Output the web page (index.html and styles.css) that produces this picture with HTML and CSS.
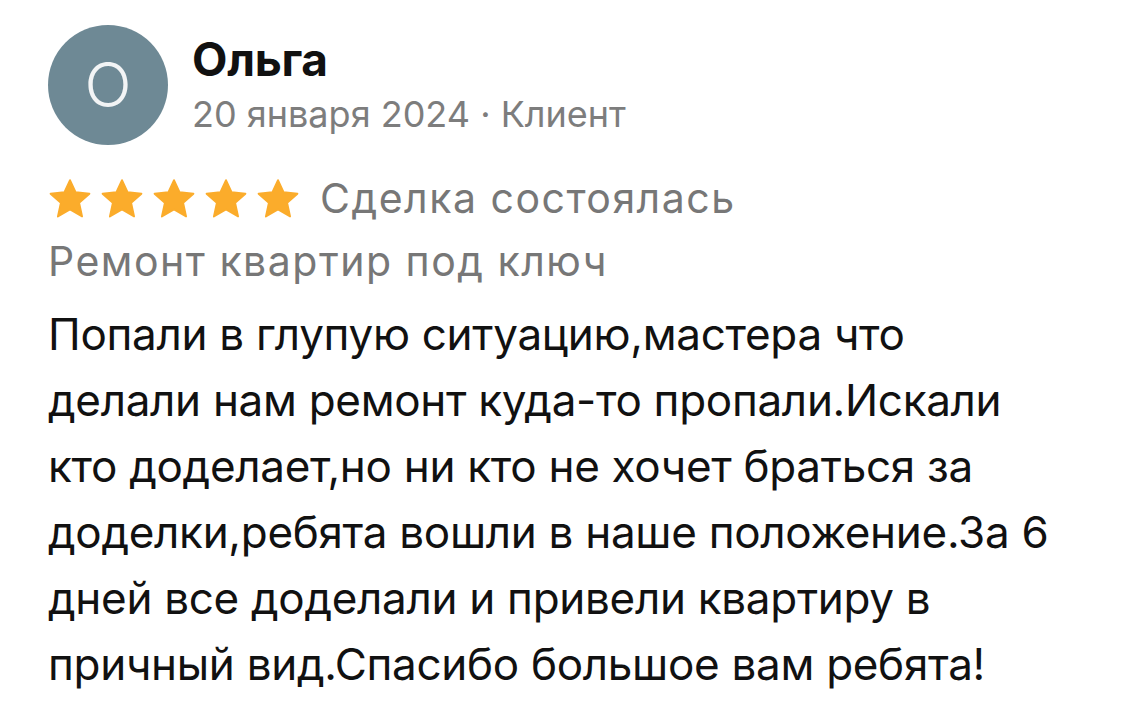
FILE: index.html
```html
<!DOCTYPE html>
<html lang="ru">
<head>
  <meta charset="UTF-8">
  <meta name="viewport" content="width=device-width, initial-scale=1.0">
  <title>Отзыв</title>
  <link rel="stylesheet" href="styles.css">
</head>
<body>
  <div class="review">
    <div class="review-header">
      <div class="avatar">О</div>
      <div class="author">
        <div class="author-name">Ольга</div>
        <div class="author-meta">20 января 2024 · Клиент</div>
      </div>
    </div>

    <div class="rating-row">
      <div class="stars">
        <svg class="star" viewBox="0 0 24 22"><polygon points="12,1 15.1,7.6 22.6,8.4 17,13.4 18.6,20.8 12,17 5.4,20.8 7,13.4 1.4,8.4 8.9,7.6"/></svg>
        <svg class="star" viewBox="0 0 24 22"><polygon points="12,1 15.1,7.6 22.6,8.4 17,13.4 18.6,20.8 12,17 5.4,20.8 7,13.4 1.4,8.4 8.9,7.6"/></svg>
        <svg class="star" viewBox="0 0 24 22"><polygon points="12,1 15.1,7.6 22.6,8.4 17,13.4 18.6,20.8 12,17 5.4,20.8 7,13.4 1.4,8.4 8.9,7.6"/></svg>
        <svg class="star" viewBox="0 0 24 22"><polygon points="12,1 15.1,7.6 22.6,8.4 17,13.4 18.6,20.8 12,17 5.4,20.8 7,13.4 1.4,8.4 8.9,7.6"/></svg>
        <svg class="star" viewBox="0 0 24 22"><polygon points="12,1 15.1,7.6 22.6,8.4 17,13.4 18.6,20.8 12,17 5.4,20.8 7,13.4 1.4,8.4 8.9,7.6"/></svg>
      </div>
      <span class="deal-status">Сделка состоялась</span>
    </div>

    <div class="service">Ремонт квартир под ключ</div>

    <p class="review-text">Попали в глупую ситуацию,мастера что<br>
      делали нам ремонт куда-то пропали.Искали<br>
      кто доделает,но ни кто не хочет браться за<br>
      доделки,ребята вошли в наше положение.За 6<br>
      дней все доделали и привели квартиру в<br>
      причный вид.Спасибо большое вам ребята!</p>
  </div>
</body>
</html>
```

FILE: styles.css
```css
* {
  margin: 0;
  padding: 0;
  box-sizing: border-box;
}

body {
  font-family: 'Inter', 'Noto Sans', sans-serif;
  background: #fff;
  color: #111;
}

.review {
  padding: 25px 48px 0;
  width: 1125px;
}

.review-header {
  display: flex;
  align-items: center;
  gap: 24px;
}

.avatar {
  flex-shrink: 0;
  width: 120px;
  height: 120px;
  border-radius: 50%;
  background: #6e8995;
  color: #f2f4f5;
  display: flex;
  align-items: center;
  justify-content: center;
  font-size: 62px;
  font-weight: 300;
  padding-bottom: 2px;
}

.author {
  margin-top: 2px;
}

.author-name {
  font-size: 46px;
  font-weight: 700;
  line-height: 52px;
  color: #111;
  letter-spacing: -0.3px;
}

.author-meta {
  font-size: 36px;
  line-height: 50px;
  color: #7d7d7d;
  margin-top: 4px;
}

.rating-row {
  display: flex;
  align-items: center;
  gap: 20px;
  margin-top: 28px;
}

.stars {
  display: flex;
  gap: 8px;
}

.star {
  width: 44px;
  height: 41px;
  fill: #fbac2b;
  stroke: #fbac2b;
  stroke-width: 1;
  stroke-linejoin: round;
}

.deal-status {
  font-size: 41px;
  color: #777;
  letter-spacing: 1.5px;
}

.service {
  font-size: 41px;
  line-height: 60px;
  color: #777;
  letter-spacing: 1.5px;
  margin-top: 8px;
}

.review-text {
  font-size: 44px;
  line-height: 66px;
  color: #111;
  letter-spacing: -0.3px;
  margin-top: 10px;
  white-space: nowrap;
}
```
